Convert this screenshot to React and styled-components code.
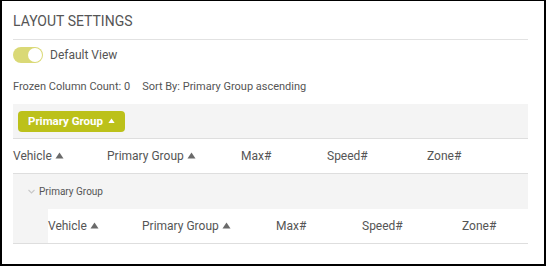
import styled, { createGlobalStyle } from 'styled-components';

const Global = createGlobalStyle`
    html, body {
        margin: 0;
        padding: 0;
        background: #fff;
    }
    body {
        font-family: Roboto, 'Liberation Sans', sans-serif;
    }
`;

const Panel = styled.div`
    width: 546px;
    height: 266px;
    box-sizing: border-box;
    border: solid #000;
    border-width: 1px 2px 2px 2px;
    padding: 0 16px 0 11px;
    color: #555;
`;

const Title = styled.h2`
    margin: 0;
    height: 39px;
    display: flex;
    align-items: center;
    font-size: 14px;
    font-weight: 400;
    color: #555;
    border-bottom: 1px solid #e2e2e2;
    padding-top: 2px;
    box-sizing: border-box;
`;

const ToggleRow = styled.div`
    display: flex;
    align-items: center;
    gap: 7px;
    margin-top: 7px;
    height: 16px;
    font-size: 12px;
`;

const Track = styled.span`
    width: 30px;
    height: 16px;
    border-radius: 8px;
    background: #dad976;
    display: flex;
    justify-content: flex-end;
    align-items: center;
    padding: 1px;
    box-sizing: border-box;
`;

const Knob = styled.span`
    width: 14px;
    height: 14px;
    border-radius: 50%;
    background: #fff;
`;

const Info = styled.div`
    display: flex;
    gap: 12px;
    margin-top: 17px;
    font-size: 11px;
    line-height: 13px;
    color: #555;
`;

const GroupBar = styled.div`
    margin-top: 11px;
    height: 35px;
    background: #f4f4f4;
    border-bottom: 1px solid #dedede;
    box-sizing: border-box;
    display: flex;
    align-items: center;
    padding-left: 5px;
`;

const GroupButton = styled.button`
    height: 21px;
    width: 107px;
    border: none;
    border-radius: 4px;
    background: #bcc11a;
    color: #fff;
    font-family: inherit;
    font-weight: 700;
    font-size: 11.5px;
    display: flex;
    align-items: center;
    justify-content: center;
    gap: 5px;
    padding: 0;
`;

const HeaderRow = styled.div`
    display: grid;
    grid-template-columns: ${(p) => (p.$indent ? '35px ' : '')}94px 134px 86px 100px 1fr;
    height: 35px;
    border-bottom: 1px solid #dedede;
    box-sizing: border-box;
    align-items: center;
    font-size: 12px;
    color: #555;
`;

const Indent = styled.div`
    align-self: stretch;
    background: #f4f4f4;
`;

const Cell = styled.div`
    display: flex;
    align-items: center;
    gap: 3px;
`;

const GroupRow = styled.div`
    height: 35px;
    background: #f4f4f4;
    display: flex;
    align-items: center;
    gap: 4px;
    padding-left: 15px;
    font-size: 10px;
    color: #555;
`;

const columns = [
    { label: 'Vehicle', sort: true },
    { label: 'Primary Group', sort: true },
    { label: 'Max#' },
    { label: 'Speed#' },
    { label: 'Zone#' },
];

function SortArrow({ size = 9, color = '#6a6a6a' }) {
    return (
        <svg width={size} height={size * 0.78} viewBox="0 0 9 7">
            <path d="M4.5 0.5L8.5 6.5H0.5Z" fill={color} />
        </svg>
    );
}

function Header({ indent }) {
    return (
        <HeaderRow $indent={indent}>
            {indent && <Indent />}
            {columns.map((c) => (
                <Cell key={c.label}>
                    {c.label}
                    {c.sort && <SortArrow />}
                </Cell>
            ))}
        </HeaderRow>
    );
}

export default function App() {
    return (
        <>
            <Global />
            <Panel>
                <Title>LAYOUT SETTINGS</Title>
                <ToggleRow>
                    <Track>
                        <Knob />
                    </Track>
                    Default View
                </ToggleRow>
                <Info>
                    <span>Frozen Column Count: 0</span>
                    <span>Sort By: Primary Group ascending</span>
                </Info>
                <GroupBar>
                    <GroupButton>
                        Primary Group <SortArrow size={7} color="#fff" />
                    </GroupButton>
                </GroupBar>
                <Header />
                <GroupRow>
                    <svg width="7" height="5" viewBox="0 0 7 5">
                        <path d="M0.5 1l3 3 3-3" fill="none" stroke="#c8c8c8" strokeWidth="1.1" />
                    </svg>
                    Primary Group
                </GroupRow>
                <Header indent />
            </Panel>
        </>
    );
}
